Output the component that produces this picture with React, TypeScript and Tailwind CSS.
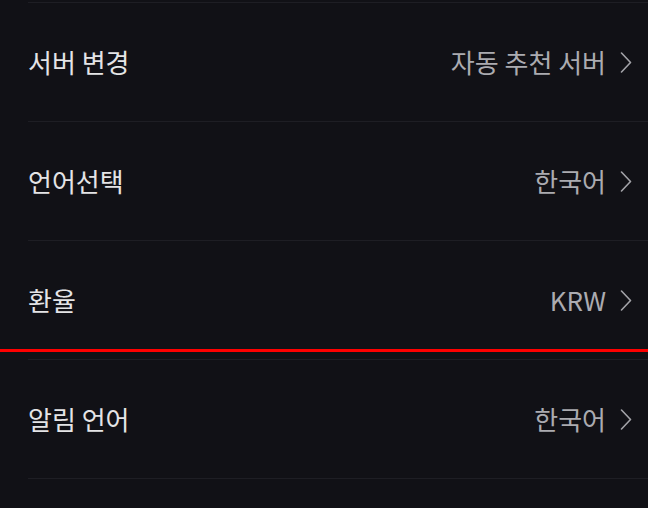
import React from 'react';

const rows = [
  { label: '서버 변경', value: '자동 추천 서버' },
  { label: '언어선택', value: '한국어' },
  { label: '환율', value: 'KRW', marked: true },
  { label: '알림 언어', value: '한국어' },
];

function Chevron() {
  return (
    <svg width="12" height="21" viewBox="0 0 12 21" fill="none" className="shrink-0">
      <polyline points="1.5,1 10.5,10.5 1.5,20" stroke="#a3a3a8" strokeWidth="1.6" strokeLinecap="round" strokeLinejoin="round" />
    </svg>
  );
}

export default function App() {
  return (
    <main
      className="h-[508px] w-[648px] overflow-hidden bg-[#111116]"
      style={{ fontFamily: '"Noto Sans CJK KR", "Noto Sans", sans-serif' }}
    >
      {/* tail of the previous row */}
      <div className="pl-[28px]">
        <div className="h-[3px] border-b border-[#1e1e24]" />
      </div>

      {rows.map((row) => (
        <div key={row.label} className="relative pl-[28px]">
          <div className="flex h-[119px] items-center justify-between border-b border-[#1e1e24] pr-[16px]">
            <span className="text-[26px] leading-none text-[#e4e4e6]">{row.label}</span>
            <div className="flex items-center gap-[14px]">
              <span className="text-[26px] leading-none text-[#ababb0]">{row.value}</span>
              <Chevron />
            </div>
          </div>
          {row.marked && <div className="absolute bottom-[8px] left-0 right-0 h-[3px] bg-[#f00]" />}
        </div>
      ))}
    </main>
  );
}
